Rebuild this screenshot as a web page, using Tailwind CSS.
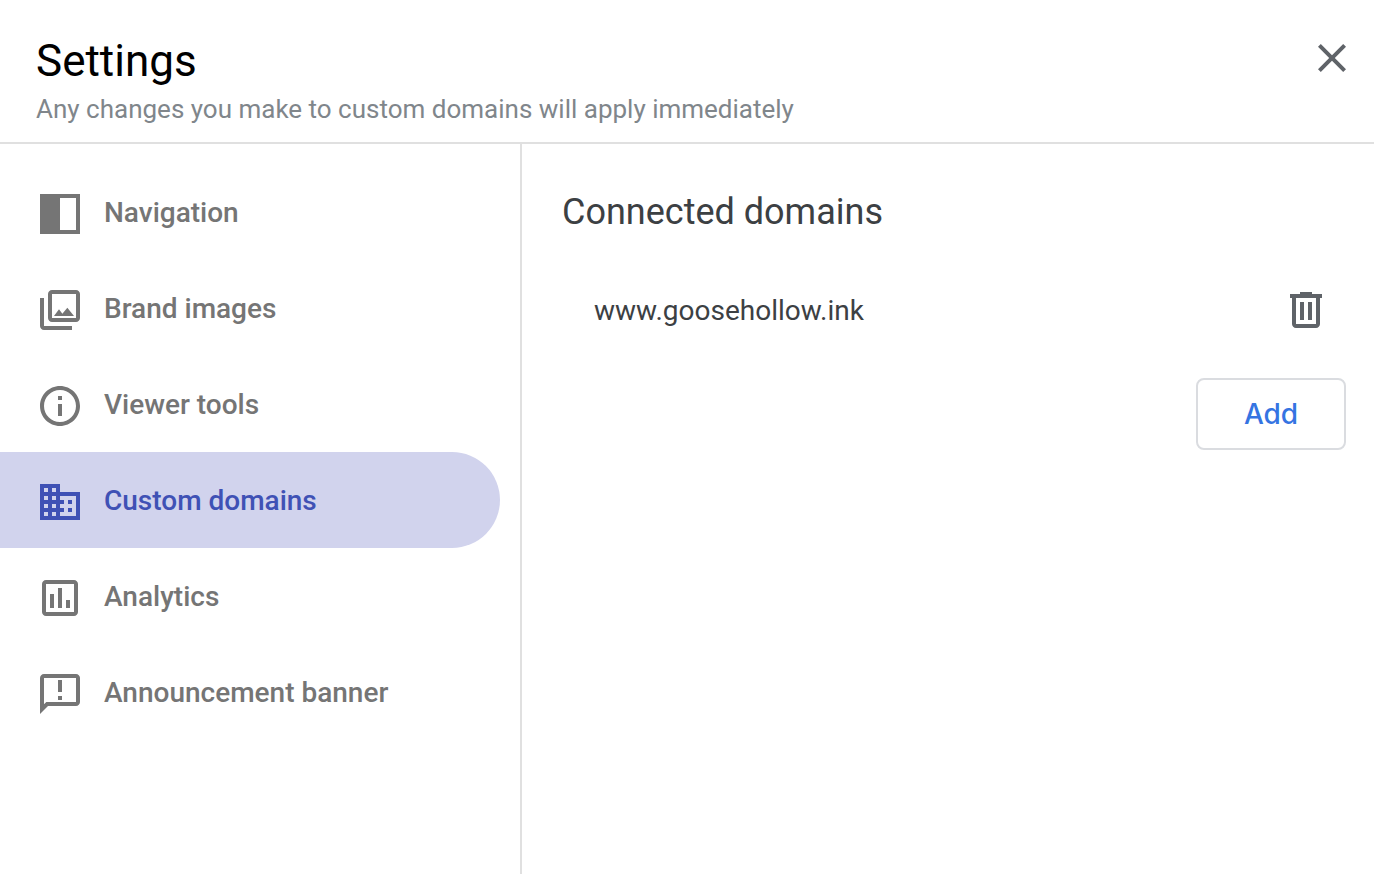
<!DOCTYPE html>
<html lang="en">
<head>
    <meta charset="UTF-8">
    <meta name="viewport" content="width=device-width, initial-scale=1.0">
    <title>Settings</title>
    <script src="https://cdn.jsdelivr.net/npm/@tailwindcss/browser@4"></script>
</head>
<body class="flex flex-col min-h-screen bg-white font-['Roboto',sans-serif] text-[#3c4043]">

    <header class="flex justify-between items-start border-b-2 border-[#e0e0e0] pl-9 pr-[18px] pt-[34px] pb-4">
        <div>
            <h1 class="text-[44px] leading-[54px] text-black">Settings</h1>
            <p class="mt-1 text-[26px] leading-[34px] text-[#80868b]">Any changes you make to custom domains will apply immediately</p>
        </div>
        <button type="button" aria-label="Close" class="text-[#5f6368] cursor-pointer">
            <svg class="size-12" viewBox="0 0 24 24" fill="currentColor"><path d="M19 6.41L17.59 5 12 10.59 6.41 5 5 6.41 10.59 12 5 17.59 6.41 19 12 13.41 17.59 19 19 17.59 13.41 12z"/></svg>
        </button>
    </header>

    <div class="flex flex-1">
        <nav class="w-[522px] shrink-0 border-r-2 border-[#e0e0e0] pt-5 pr-5 text-[28px] font-medium text-[#757575]">
            <a href="#navigation" class="flex items-center gap-5 h-24 pl-9 rounded-r-full">
                <svg class="size-12 mt-1" viewBox="0 0 24 24" fill="currentColor"><path d="M2 2h20v20H2zM12 4v16h8V4z" fill-rule="evenodd"/></svg>
                <span class="mt-0.5">Navigation</span>
            </a>
            <a href="#brand" class="flex items-center gap-5 h-24 pl-9 rounded-r-full">
                <svg class="size-12 mt-1" viewBox="0 0 24 24" fill="currentColor"><path d="M20 4v12H8V4h12m0-2H8c-1.100 0-2 .9-2 2v12c0 1.100.9 2 2 2h12c1.100 0 2-.9 2-2V4c0-1.100-.9-2-2-2zm-8.500 9.670l1.690 2.260 2.480-3.100L19 15H9zM2 6v14c0 1.100.9 2 2 2h14v-2H4V6H2z"/></svg>
                <span class="mt-0.5">Brand images</span>
            </a>
            <a href="#viewer" class="flex items-center gap-5 h-24 pl-9 rounded-r-full">
                <svg class="size-12 mt-1" viewBox="0 0 24 24" fill="currentColor"><path d="M11 7h2v2h-2zm0 4h2v6h-2zm1-9C6.480 2 2 6.480 2 12s4.480 10 10 10 10-4.480 10-10S17.520 2 12 2zm0 18c-4.410 0-8-3.590-8-8s3.590-8 8-8 8 3.590 8 8-3.590 8-8 8z"/></svg>
                <span class="mt-0.5">Viewer tools</span>
            </a>
            <a href="#domains" aria-current="page" class="flex items-center gap-5 h-24 pl-9 rounded-r-full bg-[#d1d3ed] text-[#3f51b5]">
                <svg class="size-12 mt-1" viewBox="0 0 24 24" fill="currentColor"><path d="M12 7V3H2v18h20V7H12zM6 19H4v-2h2v2zm0-4H4v-2h2v2zm0-4H4V9h2v2zm0-4H4V5h2v2zm4 12H8v-2h2v2zm0-4H8v-2h2v2zm0-4H8V9h2v2zm0-4H8V5h2v2zm10 12h-8v-2h2v-2h-2v-2h2v-2h-2V9h8v10zm-2-8h-2v2h2v-2zm0 4h-2v2h2v-2z"/></svg>
                <span class="mt-0.5">Custom domains</span>
            </a>
            <a href="#analytics" class="flex items-center gap-5 h-24 pl-9 rounded-r-full">
                <svg class="size-12 mt-1" viewBox="0 0 24 24" fill="currentColor"><path d="M19 3H5c-1.100 0-2 .9-2 2v14c0 1.100.9 2 2 2h14c1.100 0 2-.9 2-2V5c0-1.100-.9-2-2-2zm0 16H5V5h14v14zM7 10h2v7H7zm4-3h2v10h-2zm4 6h2v4h-2z"/></svg>
                <span class="mt-0.5">Analytics</span>
            </a>
            <a href="#banner" class="flex items-center gap-5 h-24 pl-9 rounded-r-full">
                <svg class="size-12 mt-1" viewBox="0 0 24 24" fill="currentColor"><path d="M20 2H4c-1.100 0-2 .9-2 2v18l4-4h14c1.100 0 2-.9 2-2V4c0-1.100-.9-2-2-2zm0 14H5.170L4 17.170V4h16v12zM11 5h2v6h-2zm0 8h2v2h-2z"/></svg>
                <span class="mt-0.5">Announcement banner</span>
            </a>
        </nav>

        <main class="flex-1 pl-10 pr-7 pt-11">
            <h2 class="text-[36px] leading-[48px]">Connected domains</h2>
            <div class="flex items-center justify-between mt-[50px] pl-8 pr-4">
                <span class="mt-0.5 text-[28px]">www.goosehollow.ink</span>
                <button type="button" aria-label="Remove domain" class="text-[#5f6368] cursor-pointer">
                    <svg class="size-12" viewBox="0 0 24 24" fill="currentColor"><path d="M15 4V3H9v1H4v2h1v13c0 1.100.9 2 2 2h10c1.100 0 2-.9 2-2V6h1V4h-5zm2 15H7V6h10v13zM9 8h2v9H9zm4 0h2v9h-2z"/></svg>
                </button>
            </div>
            <div class="flex justify-end mt-11">
                <button type="button" class="w-[150px] h-[72px] border-2 border-[#dadce0] rounded-lg font-['Inter',sans-serif] text-[28px] font-medium text-[#3574e2] cursor-pointer">Add</button>
            </div>
        </main>
    </div>

</body>
</html>
